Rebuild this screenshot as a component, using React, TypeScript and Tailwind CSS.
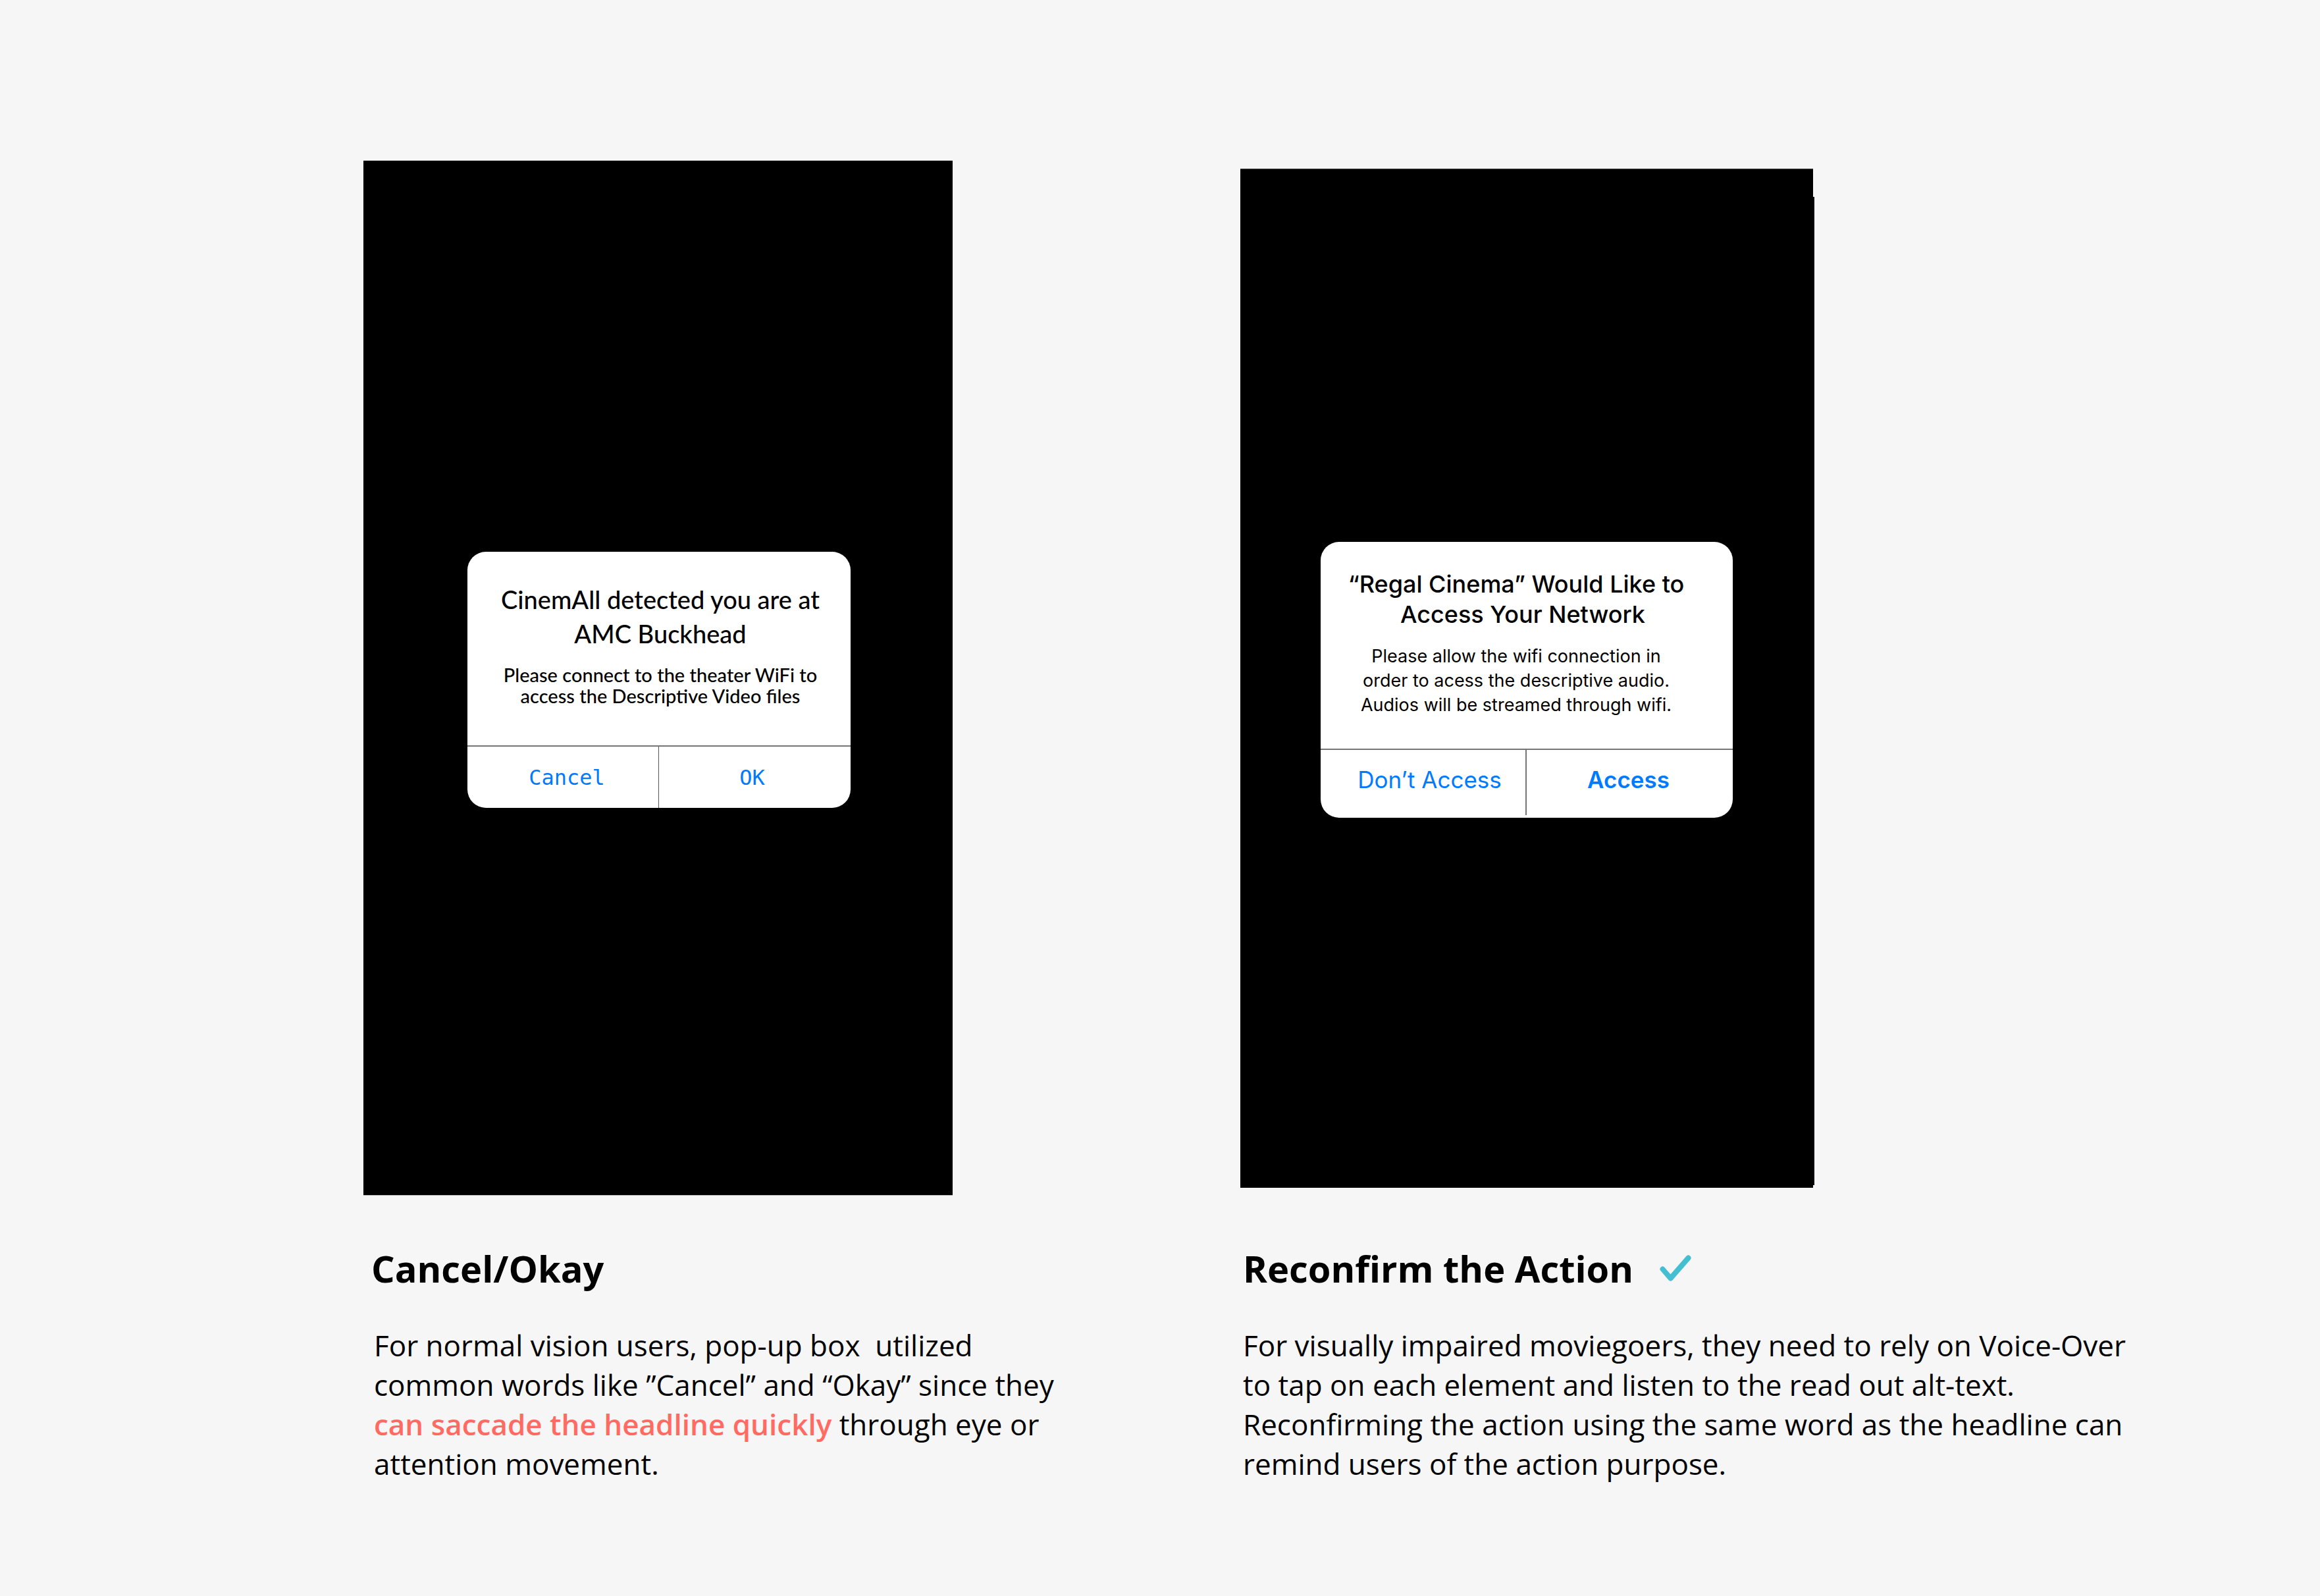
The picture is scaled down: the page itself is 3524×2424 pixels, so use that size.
import type { ReactNode } from "react";

function CheckMark() {
  return (
    <svg viewBox="0 0 48 40" className="h-10 w-12" fill="none" aria-hidden="true">
      <path
        d="M4.5 21.5 L16.5 35.5 L43.5 4.5"
        stroke="#44bfd1"
        strokeWidth="8"
        strokeLinecap="round"
        strokeLinejoin="round"
      />
    </svg>
  );
}

function Example({ phone, caption }: { phone: ReactNode; caption: ReactNode }) {
  return (
    <section>
      <div className="flex h-[1572px] items-center">{phone}</div>
      {caption}
    </section>
  );
}

function CancelPhone() {
  return (
    <div className="flex h-full w-full max-w-[895px] items-center justify-center border-b border-[#bdbdbd] bg-black pt-1.5 pl-[3px]">
      <div
        role="dialog"
        aria-labelledby="cinemall-title"
        className="w-[582px] overflow-hidden rounded-[28px] bg-white text-center text-black"
      >
        <div className="pt-[46px] pr-7 pb-[59px] pl-8 font-['Lato',sans-serif] font-medium">
          <h3 id="cinemall-title" className="text-[38px] leading-[52px] whitespace-nowrap">
            CinemAll detected you are at
            <br />
            AMC Buckhead
          </h3>
          <p className="mt-[21px] text-[29px] leading-8 whitespace-nowrap">
            Please connect to the theater WiFi to
            <br />
            access the Descriptive Video files
          </p>
        </div>
        <div className="grid h-[95px] grid-cols-2 border-t-2 border-[#757575] font-['DejaVu_Sans_Mono',monospace] text-[32px] text-[#007aff]">
          <button type="button" className="border-r border-[#555555] pl-3">
            Cancel
          </button>
          <button type="button" className="pr-2">
            OK
          </button>
        </div>
      </div>
    </div>
  );
}

function AccessPhone() {
  return (
    <div className="relative flex h-[1548px] w-full max-w-[870px] items-center justify-center border-t border-[#555555] bg-black pt-1">
      <div className="absolute top-[42px] -right-0.5 bottom-1 w-0.5 bg-[#0b0b12]" />
      <div
        role="dialog"
        aria-labelledby="regal-title"
        className="w-[626px] overflow-hidden rounded-[28px] bg-white text-center font-['Inter',sans-serif] text-black"
      >
        <div className="pt-[41px] pr-8 pb-12">
          <h3 id="regal-title" className="text-[36px] leading-[46px] font-medium whitespace-nowrap">
            “Regal Cinema” Would Like to
            <br />
            <span className="pl-5">Access Your Network</span>
          </h3>
          <p className="mt-[22px] text-[27px] leading-[37px] whitespace-nowrap">
            Please allow the wifi connection in
            <br />
            order to acess the descriptive audio.
            <br />
            Audios will be streamed through wifi.
          </p>
        </div>
        <div className="grid h-[105px] grid-cols-2 border-t-2 border-[#757575] pb-1 text-[35px] text-[#007aff]">
          <button type="button" className="border-r-2 border-[#757575] pb-2 pl-5">
            Don’t Access
          </button>
          <button type="button" className="pr-1 pb-2 font-semibold">
            Access
          </button>
        </div>
      </div>
    </div>
  );
}

export default function App() {
  return (
    <main className="grid min-h-screen grid-cols-[1332fr_1640fr] bg-[#f6f6f6] pt-[244px] pb-32 pl-[552px] font-['Open_Sans',sans-serif] text-black">
      <Example
        phone={<CancelPhone />}
        caption={
          <div className="pt-[72px] pl-3">
            <h2 className="text-[56px] leading-[76px] font-bold">Cancel/Okay</h2>
            <p className="mt-[49px] max-w-[1060px] pl-1 text-[44px] leading-[60px]">
              For normal vision users, pop-up box&nbsp; utilized common words like ”Cancel” and “Okay” since they{" "}
              <strong className="font-semibold text-[#ff6b62]">can saccade the headline quickly</strong> through eye
              or attention movement.
            </p>
          </div>
        }
      />
      <Example
        phone={<AccessPhone />}
        caption={
          <div className="pt-[72px] pl-1">
            <h2 className="flex items-center gap-10 text-[56px] leading-[76px] font-bold">
              Reconfirm the Action
              <CheckMark />
            </h2>
            <p className="mt-[49px] max-w-[1360px] text-[44px] leading-[60px]">
              For visually impaired moviegoers, they need to rely on Voice-Over to tap on each element and listen to
              the read out alt-text. Reconfirming the action using the same word as the headline can remind users of
              the action purpose.
            </p>
          </div>
        }
      />
    </main>
  );
}
